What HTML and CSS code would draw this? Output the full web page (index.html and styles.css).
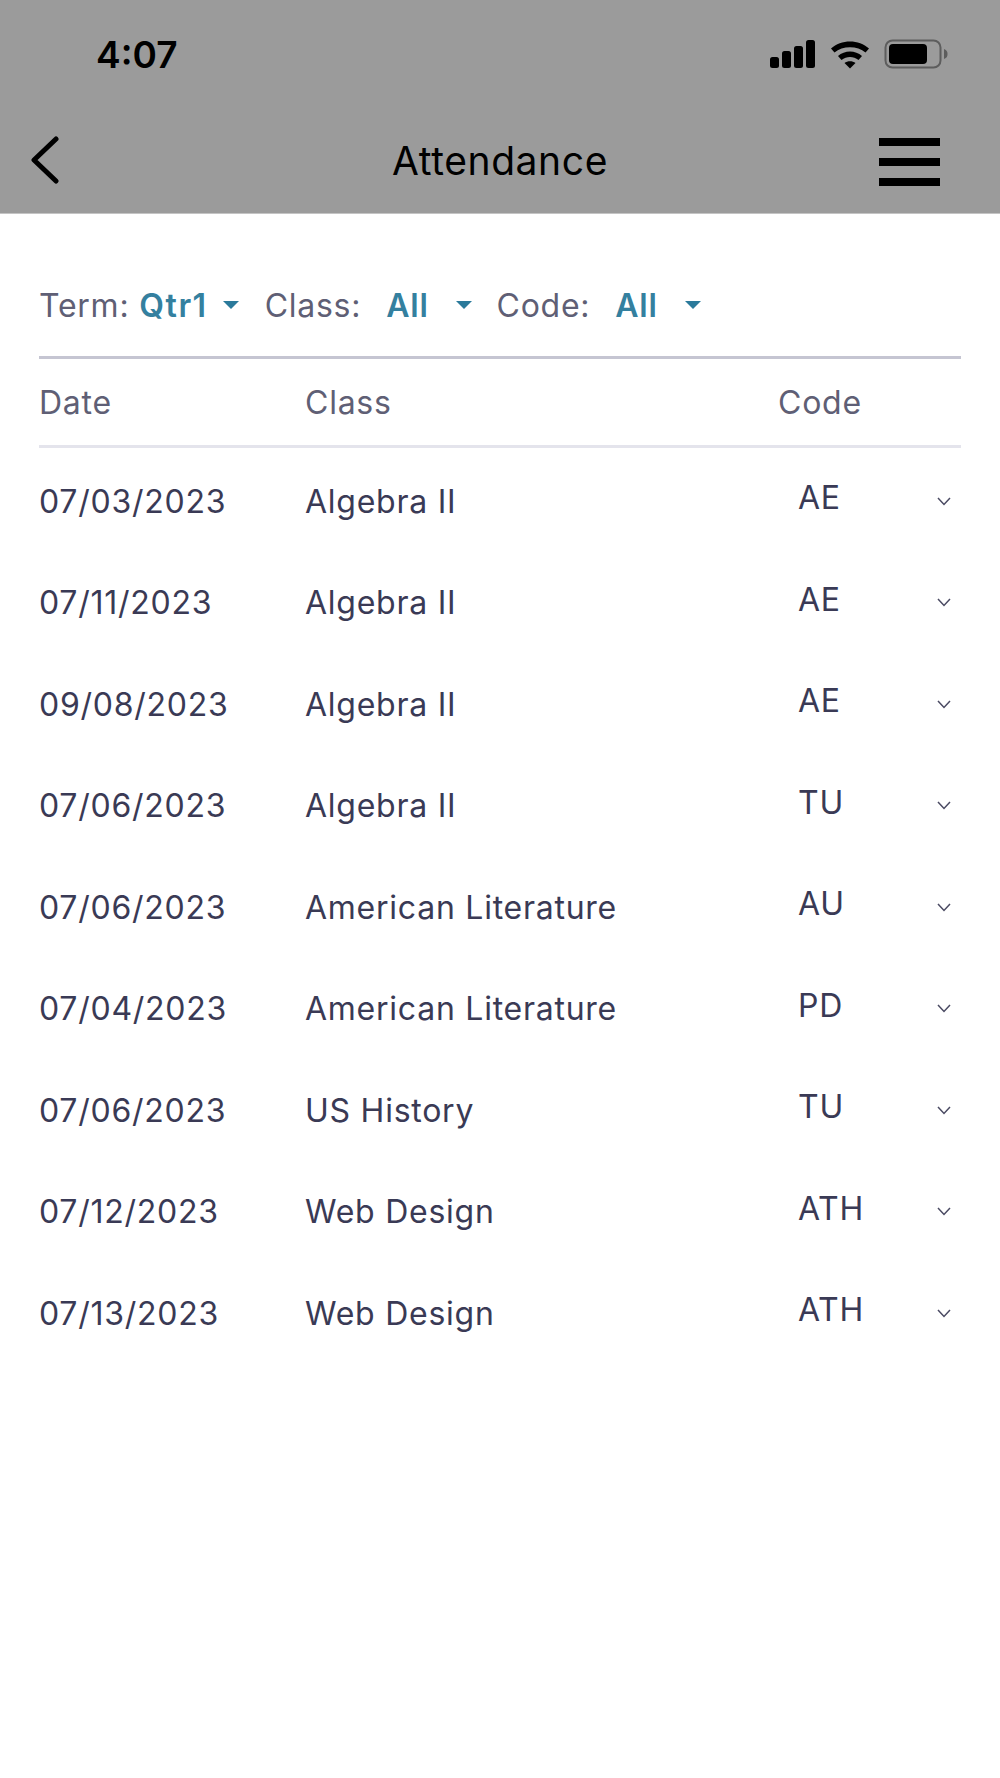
FILE: index.html
```html
<!DOCTYPE html>
<html>
	<head>
		<meta charset="utf-8">
		<meta name="viewport" content="width=device-width, initial-scale=1">
		<title>Attendance</title>
		<link rel="stylesheet" href="styles.css">
	</head>
	<body>
		<header class="top">
			<div class="status">
				<span class="time">4:07</span>
				<div class="status-icons">
					<svg class="signal" width="46" height="30" viewBox="0 0 46 30">
						<rect x="0" y="18" width="9" height="11" rx="2.5"/>
						<rect x="12" y="12" width="9" height="17" rx="2.5"/>
						<rect x="24" y="7" width="9" height="22" rx="2.5"/>
						<rect x="36" y="1" width="9" height="28" rx="2.5"/>
					</svg>
					<svg class="wifi" width="40" height="30" viewBox="0 0 40 30">
						<path d="M1 9.5C11 0 29 0 39 9.5L35.5 13.5C27.5 6.5 12.5 6.5 4.5 13.5Z"/>
						<path d="M8 17C14.5 11 25.500 11 32 17L28.500 21C23.500 17 16.500 17 11.500 21Z"/>
						<path d="M14.500 24C17.500 21.500 22.500 21.500 25.500 24L20 29.500Z"/>
					</svg>
					<svg class="battery" width="66" height="30" viewBox="0 0 66 30">
						<rect x="1.500" y="1.500" width="55" height="27" rx="7" fill="none" stroke="#5d5d5d" stroke-width="2"/>
						<rect x="5" y="5" width="38" height="20" rx="4"/>
						<path d="M60 10C63 11 63.500 13 63.500 15C63.500 17 63 19 60 20Z" fill="#5d5d5d"/>
					</svg>
				</div>
			</div>
			<nav class="nav">
				<svg class="back" width="30" height="48" viewBox="0 0 30 48">
					<path d="M26 3L4 24L26 45" fill="none" stroke="#000" stroke-width="5" stroke-linecap="round" stroke-linejoin="round"/>
				</svg>
				<h1 class="title">Attendance</h1>
				<div class="burger"><span></span><span></span><span></span></div>
			</nav>
		</header>

		<main class="content">
			<div class="filters">
				<span class="filter-label">Term:</span>
				<span class="filter-value value-term">Qtr1</span>
				<span class="caret caret-term"></span>
				<span class="filter-label">Class:</span>
				<span class="filter-value value-all">All</span>
				<span class="caret caret-all"></span>
				<span class="filter-label">Code:</span>
				<span class="filter-value value-all">All</span>
				<span class="caret caret-all"></span>
			</div>

			<div class="row head">
				<span>Date</span>
				<span>Class</span>
				<span>Code</span>
			</div>

			<div class="rows">
				<div class="row item">
					<span>07/03/2023</span><span>Algebra II</span><span class="code">AE</span>
					<svg class="chev" width="14" height="9" viewBox="0 0 14 9"><path d="M1 1L7 7.500L13 1"/></svg>
				</div>
				<div class="row item">
					<span>07/11/2023</span><span>Algebra II</span><span class="code">AE</span>
					<svg class="chev" width="14" height="9" viewBox="0 0 14 9"><path d="M1 1L7 7.500L13 1"/></svg>
				</div>
				<div class="row item">
					<span>09/08/2023</span><span>Algebra II</span><span class="code">AE</span>
					<svg class="chev" width="14" height="9" viewBox="0 0 14 9"><path d="M1 1L7 7.500L13 1"/></svg>
				</div>
				<div class="row item">
					<span>07/06/2023</span><span>Algebra II</span><span class="code">TU</span>
					<svg class="chev" width="14" height="9" viewBox="0 0 14 9"><path d="M1 1L7 7.500L13 1"/></svg>
				</div>
				<div class="row item">
					<span>07/06/2023</span><span>American Literature</span><span class="code">AU</span>
					<svg class="chev" width="14" height="9" viewBox="0 0 14 9"><path d="M1 1L7 7.500L13 1"/></svg>
				</div>
				<div class="row item">
					<span>07/04/2023</span><span>American Literature</span><span class="code">PD</span>
					<svg class="chev" width="14" height="9" viewBox="0 0 14 9"><path d="M1 1L7 7.500L13 1"/></svg>
				</div>
				<div class="row item">
					<span>07/06/2023</span><span>US History</span><span class="code">TU</span>
					<svg class="chev" width="14" height="9" viewBox="0 0 14 9"><path d="M1 1L7 7.500L13 1"/></svg>
				</div>
				<div class="row item">
					<span>07/12/2023</span><span>Web Design</span><span class="code">ATH</span>
					<svg class="chev" width="14" height="9" viewBox="0 0 14 9"><path d="M1 1L7 7.500L13 1"/></svg>
				</div>
				<div class="row item">
					<span>07/13/2023</span><span>Web Design</span><span class="code">ATH</span>
					<svg class="chev" width="14" height="9" viewBox="0 0 14 9"><path d="M1 1L7 7.500L13 1"/></svg>
				</div>
			</div>
		</main>
	</body>
</html>
```

FILE: styles.css
```css
* {
	box-sizing: border-box;
	font-family: Inter, "Liberation Sans", sans-serif;
}

body {
	margin: 0;
	background: #fff;
}

.top {
	height: 214px;
	background: #9b9b9b;
	border-bottom: 1px solid #c4c4c4;
}

.status {
	display: flex;
	justify-content: space-between;
	align-items: center;
	height: 108px;
	padding: 0 50px 0 96px;
}

.time {
	font-size: 37px;
	font-weight: 600;
	line-height: 1;
	color: #000;
}

.status-icons {
	display: flex;
	align-items: center;
	gap: 14px;
}

.status-icons svg {
	display: block;
}

.nav {
	display: grid;
	grid-template-columns: 1fr auto 1fr;
	align-items: center;
	height: 104px;
	padding: 0 30px;
}

.title {
	margin: 0;
	font-size: 39px;
	font-weight: 400;
	letter-spacing: .6px;
	color: #000;
}

.burger {
	display: flex;
	flex-direction: column;
	gap: 12px;
	width: 61px;
	margin: 3px 30px 0 0;
	justify-self: end;
}

.burger span {
	height: 8px;
	background: #000;
}

.content {
	padding: 0 39px;
}

.filters {
	display: flex;
	align-items: center;
	height: 144.500px;
	border-bottom: 3px solid #c5c5d2;
	padding: 41px 0 0 0;
	font-size: 32px;
	letter-spacing: .75px;
}

.filter-label {
	color: #5f5f75;
}

.filter-value {
	font-weight: 600;
	color: #34809f;
}

.value-term {
	margin-left: 10px;
	letter-spacing: 1.500px;
}

.value-all {
	margin-left: 25px;
}

.caret {
	width: 0;
	height: 0;
	border-left: 8px solid transparent;
	border-right: 8px solid transparent;
	border-top: 8px solid #2b7a9b;
	margin-right: 26px;
}

.caret-term {
	margin-left: 15px;
}

.caret-all {
	margin-left: 27px;
	margin-right: 25px;
}

.row {
	display: grid;
	grid-template-columns: 266px 473px 1fr 14px;
	align-items: center;
	padding: 0 10px 0 0;
	font-size: 32px;
	letter-spacing: .75px;
}

.head {
	height: 89.500px;
	padding-top: 2px;
	border-bottom: 3px solid #e4e4ec;
	color: #5f5f75;
}

.rows {
	padding-top: 2.500px;
}

.item {
	height: 101.500px;
	color: #3a3a55;
}

.code {
	padding: 0 0 7px 20px;
}

.chev {
	display: block;
}

.chev path {
	fill: none;
	stroke: #4a4a62;
	stroke-width: 1.500;
}
```
